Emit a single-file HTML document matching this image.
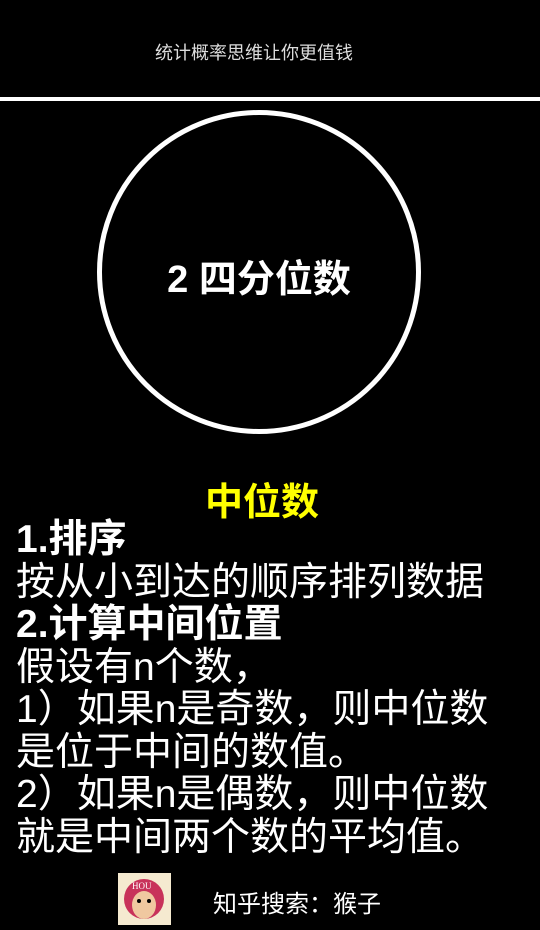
<!DOCTYPE html>
<html><head><meta charset="utf-8"><style>
body{margin:0;width:540px;height:930px;background:#000;overflow:hidden;position:relative;font-family:"Liberation Sans","Noto Sans CJK SC",sans-serif;color:#fff}
.t{position:absolute;left:0;width:508px;text-align:center;top:39px;font-size:18px;color:#ddd}
.line{position:absolute;left:0;top:97px;width:540px;height:4px;background:#fff}
.c{position:absolute;left:97px;top:110px;width:314px;height:314px;border:5px solid #fff;border-radius:50%}
.ct{position:absolute;left:97px;top:248px;width:324px;text-align:center;font-size:38px;font-weight:bold}
.h{position:absolute;left:0;width:524px;text-align:center;top:471px;font-size:38px;font-weight:bold;color:#ff0}
.b{position:absolute;left:16px;top:519px;font-size:39px;line-height:42.5px;white-space:nowrap}
.b b{font-weight:bold}
.logo{position:absolute;left:118px;top:873px;width:53px;height:52px;background:#f5ead0}
.f{position:absolute;left:213px;top:884px;font-size:24px}
</style></head><body>
<div class="t">统计概率思维让你更值钱</div>
<div class="line"></div>
<div class="c"></div>
<div class="ct">2 四分位数</div>
<div class="h">中位数</div>
<div class="b"><b>1.排序</b><br>按从小到达的顺序排列数据<br><b>2.计算中间位置</b><br>假设有n个数，<br>1）如果n是奇数，则中位数<br>是位于中间的数值。<br>2）如果n是偶数，则中位数<br>就是中间两个数的平均值。</div>
<div class="logo"><svg width="53" height="52"><circle cx="26" cy="26" r="20" fill="#c8325a"/><ellipse cx="26" cy="32" rx="12" ry="14" fill="#f0c8a0"/><text x="14" y="16" font-size="9" fill="#fff" font-family="Liberation Serif">HOU</text><circle cx="21" cy="28" r="2" fill="#000"/><circle cx="31" cy="28" r="2" fill="#000"/></svg></div>
<div class="f">知乎搜索：猴子</div>
</body></html>
